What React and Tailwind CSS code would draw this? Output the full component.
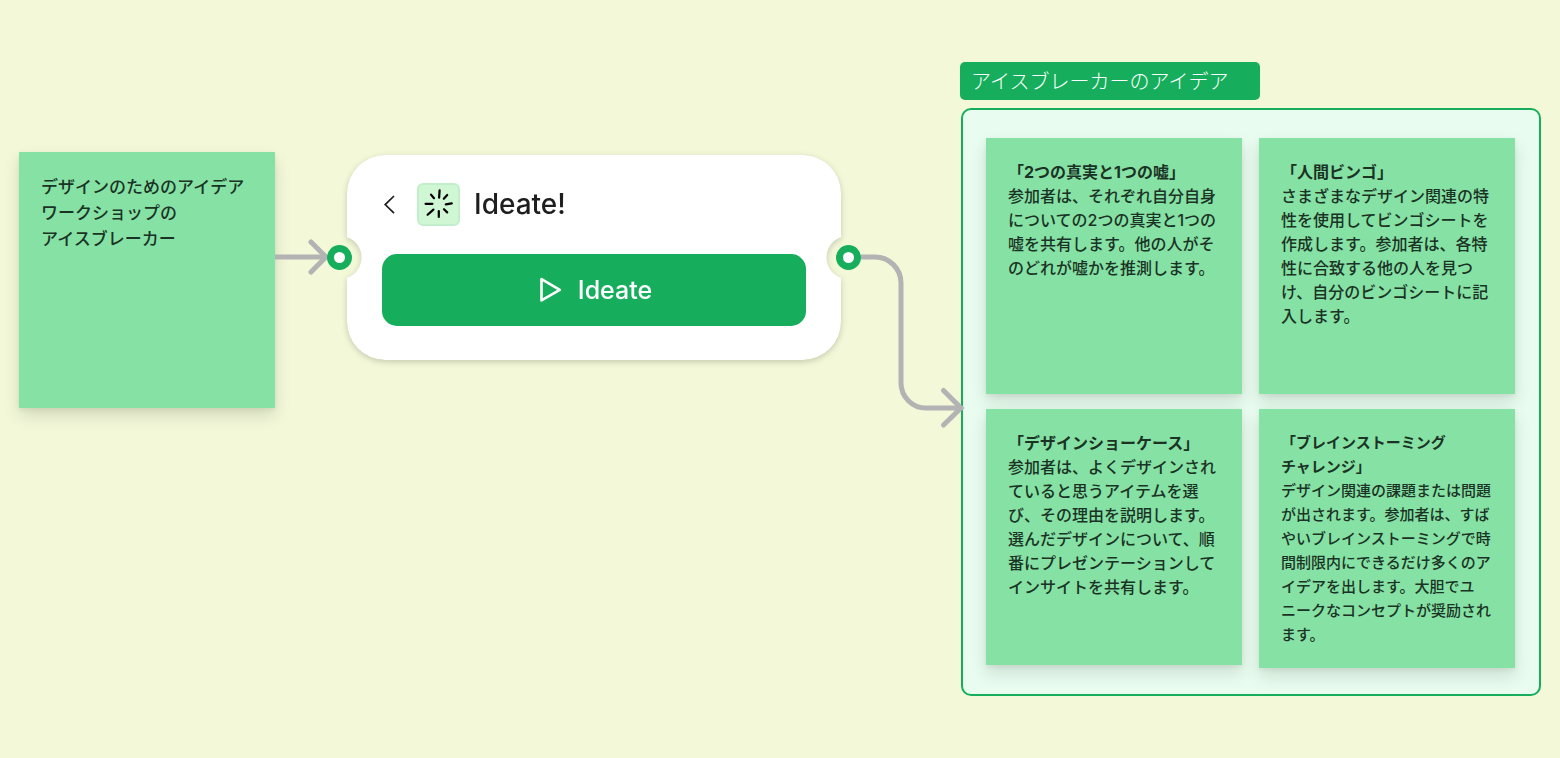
import React from 'react';

const sideNote = {
  lines: ['デザインのためのアイデア', 'ワークショップの', 'アイスブレーカー'],
};

const ideas = [
  {
    title: ['「2つの真実と1つの嘘」'],
    body: [
      '参加者は、それぞれ自分自身',
      'についての2つの真実と1つの',
      '嘘を共有します。他の人がそ',
      'のどれが嘘かを推測します。',
    ],
  },
  {
    title: ['「人間ビンゴ」'],
    body: [
      'さまざまなデザイン関連の特',
      '性を使用してビンゴシートを',
      '作成します。参加者は、各特',
      '性に合致する他の人を見つ',
      'け、自分のビンゴシートに記',
      '入します。',
    ],
  },
  {
    title: ['「デザインショーケース」'],
    body: [
      '参加者は、よくデザインされ',
      'ていると思うアイテムを選',
      'び、その理由を説明します。',
      '選んだデザインについて、順',
      '番にプレゼンテーションして',
      'インサイトを共有します。',
    ],
  },
  {
    title: ['「ブレインストーミング', 'チャレンジ」'],
    compact: true,
    body: [
      'デザイン関連の課題または問題',
      'が出されます。参加者は、すば',
      'やいブレインストーミングで時',
      '間制限内にできるだけ多くのア',
      'イデアを出します。大胆でユ',
      'ニークなコンセプトが奨励され',
      'ます。',
    ],
  },
];

const Sticky = ({ className, children }) => (
  <article
    className={`shrink-0 w-64 min-h-64 px-[22px] pt-[22px] pb-[21px] bg-[#86e1a4] text-[#1a3324] whitespace-pre shadow-[0_2px_5px_rgba(0,0,0,0.06),0_8px_16px_rgba(0,0,0,0.12)] ${className || ''}`}
  >
    {children}
  </article>
);

// Round connector handle on the edge of the widget
const Port = ({ className, label }) => (
  <button
    type="button"
    aria-label={label}
    className={`absolute top-[90px] w-[25px] h-[25px] rounded-full border-[7px] border-[#16ae5c] bg-white ${className}`}
  />
);

const Widget = () => (
  <section className="relative shrink-0 w-[494px] mt-[93px]">
    <div className="drop-shadow-[0_2px_3px_rgba(0,0,0,0.18)]">
      {/* White card with a round notch on each side */}
      <div className="rounded-[38px] bg-white px-[35px] pt-[27px] pb-[34px] [mask-composite:intersect] [mask-image:radial-gradient(circle_at_-7px_50%,transparent_21px,black_22px),radial-gradient(circle_at_calc(100%+7px)_50%,transparent_21px,black_22px)]">
        <header className="flex items-center h-11">
          <button type="button" aria-label="戻る" className="w-[35px] h-11 flex items-center">
            <svg width="16" height="22" viewBox="0 0 16 22" fill="none" stroke="#1e1e1e" strokeWidth="1.7">
              <path d="M12 3 L3.2 11.6 L12 20.2" />
            </svg>
          </button>
          <div className="w-[43px] h-[43px] rounded-[6px] border-2 border-[#c3eecb] bg-[#cff7d3] flex items-center justify-center">
            <svg width="32" height="32" viewBox="0 0 32 32" fill="none" stroke="#000" strokeWidth="2.2" strokeLinecap="round">
              <path d="M16.6 2.4 L16.1 9.6" />
              <path d="M24.2 7 L20.8 10.8" />
              <path d="M28.8 15.4 L22.8 16.4" />
              <path d="M21 21.2 L24.2 24.4" />
              <path d="M15.8 23.2 V29" />
              <path d="M10.4 21.6 L4.6 26.8" />
              <path d="M2.6 15.8 H9.4" />
              <path d="M8 6.6 L11 10.2" />
            </svg>
          </div>
          <h1 className="ml-3.5 text-[28px] leading-11 font-medium text-[#1e1e1e]">Ideate!</h1>
        </header>
        <button
          type="button"
          className="mt-7 w-full h-[72px] pl-0.5 rounded-[15px] bg-[#16ae5c] text-white flex items-center justify-center gap-4"
        >
          <svg width="24" height="26" viewBox="0 0 24 26" fill="none" stroke="currentColor" strokeWidth="2.6" strokeLinejoin="round">
            <path d="M3.5 2.2 V23.4 L21.8 12.8 Z" />
          </svg>
          <span className="text-[25px] leading-8 font-medium">Ideate</span>
        </button>
      </div>
    </div>
    <Port label="入力" className="-left-5" />
    <Port label="出力" className="-right-5" />
  </section>
);

const App = () => {
  return (
    <main className="flex items-start justify-center min-h-screen min-w-max px-[19px] pt-[62px] bg-[#f2f8d8] font-['Inter','Noto_Sans_CJK_JP',sans-serif]">
      <Sticky className="mt-[90px] text-[17px] leading-[26px] font-medium">
        <p>{sideNote.lines.join('\n')}</p>
      </Sticky>

      {/* Straight connector: note to widget */}
      <svg className="shrink-0 mt-44" width="72" height="38" viewBox="0 0 72 38" fill="none" stroke="#b3b3b3" strokeWidth="5">
        <path d="M0 19 H51" />
        <path d="M36 4 L51 19 L36 34" strokeLinecap="round" />
      </svg>

      <Widget />

      {/* Elbow connector: widget to output section */}
      <svg
        className="relative shrink-0 mt-44 overflow-visible"
        width="119"
        height="190"
        viewBox="0 0 119 190"
        fill="none"
        stroke="#b3b3b3"
        strokeWidth="5"
      >
        <path d="M20 19 H34 A26 26 0 0 1 60 45 V145 A25 25 0 0 0 85 170 H119" />
        <path d="M102.5 152.5 L120 170 L102.5 187" strokeLinecap="round" />
      </svg>

      <section className="shrink-0">
        <h2 className="w-[300px] h-[38px] px-[11px] rounded-[5px] bg-[#16ae5c] text-white text-xl leading-10 font-light">
          アイスブレーカーのアイデア
        </h2>
        <div className="mt-2 ml-px w-[580px] grid grid-cols-[256px_256px] items-start gap-x-[17px] gap-y-[15px] px-[23px] pt-7 pb-[26px] rounded-[10px] border-2 border-[#16ae5c] bg-[#e8fdef]">
          {ideas.map((idea) => (
            <Sticky
              key={idea.title[0]}
              className={idea.compact ? 'text-[15px] leading-6' : 'text-base leading-6'}
            >
              <h3 className="font-bold">{idea.title.join('\n')}</h3>
              <p className="font-medium">{idea.body.join('\n')}</p>
            </Sticky>
          ))}
        </div>
      </section>
    </main>
  );
};

export default App;
